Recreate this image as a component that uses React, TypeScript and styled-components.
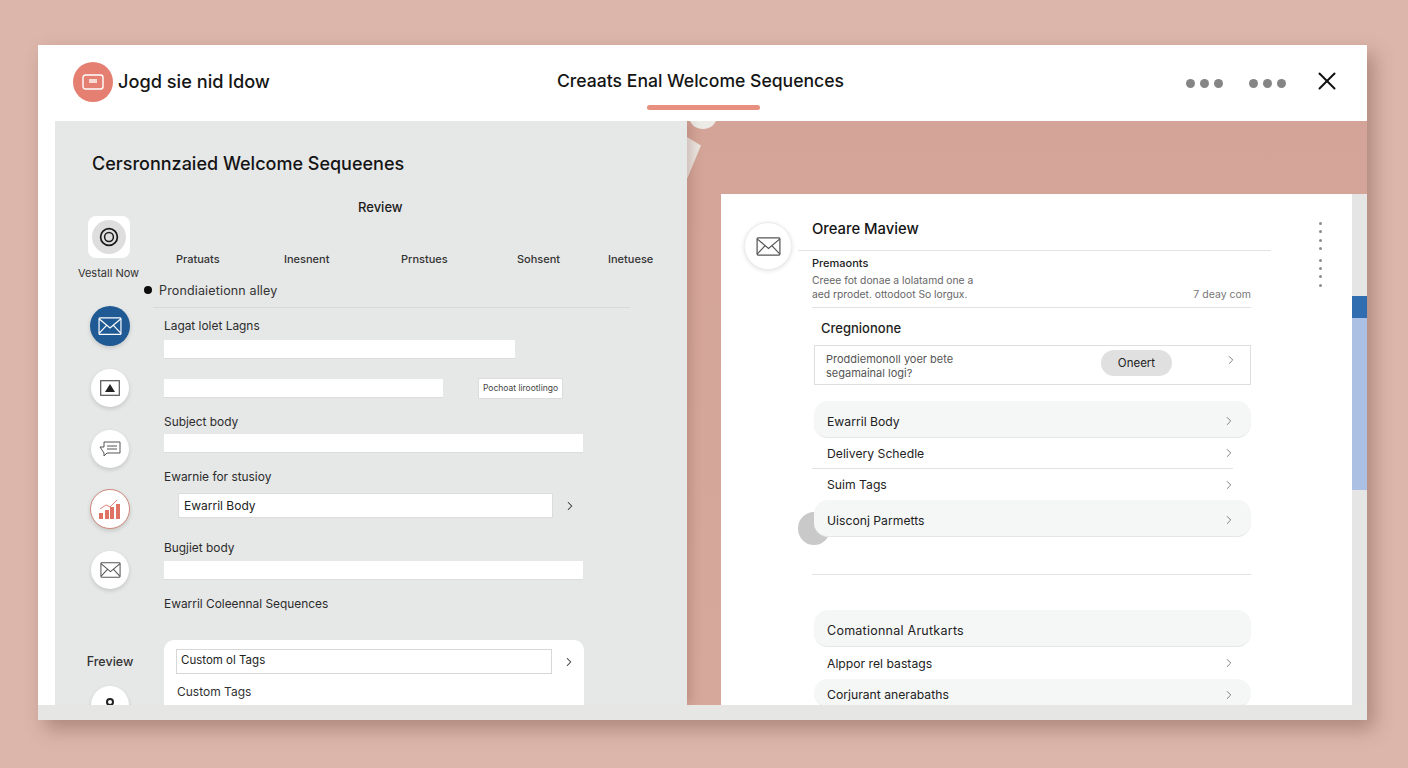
import React from 'react';
import styled, { createGlobalStyle } from 'styled-components';
import { ChevronRight, X } from 'lucide-react';

const GlobalStyle = createGlobalStyle`
    html, body {
        margin: 0;
        padding: 0;
        background: #dcb6aa;
    }
    * {
        box-sizing: border-box;
    }
`;

const Page = styled.div`
    width: 1408px;
    height: 768px;
    padding: 45px 41px 48px 38px;
    overflow: hidden;
    background: #dcb6aa;
    font-family: Inter, "Liberation Sans", sans-serif;
    color: #1c1c1c;
`;

const Window = styled.div`
    width: 1329px;
    height: 675px;
    display: flex;
    flex-direction: column;
    background: #fff;
    box-shadow: 7px 9px 18px rgba(100, 60, 50, 0.38);
`;

const Header = styled.header`
    height: 76px;
    flex: none;
    display: grid;
    grid-template-columns: 1fr auto 1fr;
    align-items: start;
    padding: 17px 39px 0 35px;
`;

const Brand = styled.div`
    display: flex;
    align-items: center;
    gap: 5px;
`;

const LogoCircle = styled.div`
    width: 40px;
    height: 40px;
    border-radius: 50%;
    background: #e57f72;
    display: flex;
    align-items: center;
    justify-content: center;
`;

const BrandName = styled.div`
    font-size: 18.2px;
    font-weight: 500;
    color: #161616;
    margin-top: -2px;
`;

const CenterTitle = styled.div`
    display: flex;
    flex-direction: column;
    align-items: center;
    padding-top: 8px;
`;

const WindowTitle = styled.div`
    font-size: 17.6px;
    line-height: 22px;
    font-weight: 500;
    color: #151515;
`;

const TitleAccent = styled.div`
    width: 113px;
    height: 5px;
    margin: 13px 0 0 6px;
    border-radius: 3px;
    background: #e8907f;
`;

const HeaderActions = styled.div`
    display: flex;
    justify-content: flex-end;
    align-items: center;
    height: 40px;
    margin-right: -14px;
    color: #111;
`;

const DotGroup = styled.div`
    display: flex;
    gap: 5px;
    margin-right: 26px;
    margin-top: 3px;
`;

const HeaderDot = styled.span`
    width: 9px;
    height: 9px;
    border-radius: 50%;
    background: #858585;
`;

const CloseIcon = styled(X)`
    margin-top: -2px;
`;

const Body = styled.div`
    flex: 1;
    min-height: 0;
    margin-left: 17px;
    display: flex;
    position: relative;
    overflow: hidden;
    background: #d3a497;
`;

const FootStrip = styled.div`
    height: 15px;
    flex: none;
    background: #e6e6e5;
`;

const FoldCircle = styled.div`
    position: absolute;
    left: 634px;
    top: -18px;
    width: 28px;
    height: 26px;
    border-radius: 50%;
    background: #ecebe6;
`;

const FoldCorner = styled.div`
    position: absolute;
    left: 632px;
    top: 16px;
    width: 14px;
    height: 42px;
    background: #e9e3de;
    clip-path: polygon(0 0, 100% 20%, 0 100%);
`;

/* left panel */
const LeftPanel = styled.section`
    width: 632px;
    flex: none;
    overflow: hidden;
    background: #e6e7e7;
    box-shadow: 4px 0 10px rgba(120, 70, 60, 0.25);
    z-index: 1;
`;

const PanelTitle = styled.h2`
    margin: 31px 0 0 37px;
    font-size: 18px;
    line-height: 24px;
    font-weight: 500;
    color: #141414;
`;

const ReviewLabel = styled.div`
    margin-top: 22px;
    padding-left: 303px;
    font-size: 13px;
    line-height: 18px;
    font-weight: 500;
`;

const PanelColumns = styled.div`
    display: flex;
`;

const Sidebar = styled.nav`
    width: 89px;
    flex: none;
    padding: 0 2px 0 23px;
    display: flex;
    flex-direction: column;
    align-items: center;
`;

const SquareButton = styled.div`
    width: 42px;
    height: 42px;
    margin-left: -2px;
    border-radius: 8px;
    background: #fff;
    display: flex;
    align-items: center;
    justify-content: center;
`;

const SquareInner = styled.div`
    width: 34px;
    height: 34px;
    border-radius: 50%;
    background: #dedede;
    display: flex;
    align-items: center;
    justify-content: center;
`;

const SideLabel = styled.div<{ $mt: number; $strong?: boolean }>`
    margin-top: ${(p) => p.$mt}px;
    margin-left: ${(p) => (p.$strong ? '0' : '-3px')};
    font-size: ${(p) => (p.$strong ? '12.5px' : '11px')};
    font-weight: ${(p) => (p.$strong ? 500 : 400)};
    line-height: 14px;
    white-space: nowrap;
    color: #333;
`;

const SideCircle = styled.div<{ $mt: number; $size?: number; $bg?: string; $ring?: string }>`
    width: ${(p) => p.$size ?? 38}px;
    height: ${(p) => p.$size ?? 38}px;
    flex: none;
    margin-top: ${(p) => p.$mt}px;
    border-radius: 50%;
    background: ${(p) => p.$bg ?? '#fff'};
    border: ${(p) => (p.$ring ? `1.5px solid ${p.$ring}` : 'none')};
    box-shadow: 0 2px 4px rgba(0, 0, 0, 0.14);
    display: flex;
    align-items: center;
    justify-content: center;
`;

const Form = styled.div`
    flex: 1;
    min-width: 0;
    padding-top: 36px;
`;

const Tabs = styled.div`
    display: grid;
    grid-template-columns: 108px 117px 116px 91px auto;
    margin-left: 32px;
    height: 14px;
    align-items: center;
`;

const Tab = styled.span`
    font-size: 11px;
    font-weight: 500;
    color: #333;
    white-space: nowrap;
`;

const BulletRow = styled.div`
    display: flex;
    align-items: center;
    gap: 7px;
    margin-top: 17px;
    height: 14px;
    font-size: 12.5px;
    letter-spacing: 0.15px;
    color: #333;
`;

const Bullet = styled.span`
    width: 8px;
    height: 8px;
    border-radius: 50%;
    background: #0c0c0c;
`;

const FormDivider = styled.div`
    height: 1px;
    margin: 10px 57px 0 9px;
    background: #d8d9d9;
`;

const FieldLabel = styled.div<{ $mt: number }>`
    margin: ${(p) => p.$mt}px 0 0 20px;
    font-size: 11.9px;
    line-height: 16px;
    color: #2c2c2c;
`;

const FieldInput = styled.div<{ $mt: number; $w: number }>`
    width: ${(p) => p.$w}px;
    height: 19px;
    margin: ${(p) => p.$mt}px 0 0 20px;
    background: #fff;
    border-bottom: 1px solid #dcdcdc;
`;

const FieldRow = styled.div<{ $mt: number }>`
    display: flex;
    align-items: center;
    margin-top: ${(p) => p.$mt}px;
`;

const SmallButton = styled.div`
    width: 85px;
    height: 21px;
    margin-left: 35px;
    border: 1px solid #dcdcdc;
    background: #fff;
    font-size: 8.5px;
    line-height: 19px;
    text-align: center;
    white-space: nowrap;
    color: #444;
`;

const ValueBox = styled.div`
    width: 375px;
    height: 25px;
    margin-left: 34px;
    padding-left: 5px;
    border: 1px solid #dcdcdc;
    background: #fff;
    font-size: 12px;
    line-height: 24px;
    color: #222;
`;

const RowChevron = styled.span`
    margin-left: 10px;
    display: flex;
`;

const TagsCard = styled.div`
    width: 420px;
    height: 80px;
    margin: 28px 0 0 20px;
    padding: 9px 0 0 12px;
    border-radius: 10px 10px 0 0;
    background: #fff;
`;

const TagsInputRow = styled.div`
    display: flex;
    align-items: center;
`;

const TagsInput = styled.div`
    width: 376px;
    height: 25px;
    padding-left: 4px;
    border: 1px solid #d8d8d8;
    font-size: 11.5px;
    line-height: 20px;
    color: #222;
`;

const TagsText = styled.div`
    margin: 10px 0 0 1px;
    font-size: 12px;
    line-height: 16px;
    color: #333;
`;

/* right side */
const RightSide = styled.section`
    flex: 1;
    min-width: 0;
    padding: 73px 0 0 34px;
    display: flex;
    background: linear-gradient(180deg, #d3a497, #d5a89b);
`;

const Card = styled.div`
    width: 631px;
    flex: none;
    display: flex;
    overflow: hidden;
    background: #fff;
`;

const AvatarColumn = styled.div`
    width: 77px;
    flex: none;
    padding: 28px 0 0 23px;
`;

const Avatar = styled.div`
    width: 48px;
    height: 48px;
    border-radius: 50%;
    background: #fff;
    border: 1px solid #ececec;
    box-shadow: 0 1px 4px rgba(0, 0, 0, 0.12);
    display: flex;
    align-items: center;
    justify-content: center;
`;

const MainColumn = styled.div`
    width: 473px;
    flex: none;
`;

const CardTitle = styled.h3`
    margin: 25px 0 0 14px;
    font-size: 14.8px;
    line-height: 20px;
    font-weight: 500;
    color: #141414;
`;

const TitleRule = styled.div`
    height: 1px;
    margin-top: 11px;
    background: #e4e4e4;
`;

const Inner = styled.div`
    margin: 0 20px 0 14px;
`;

const Eyebrow = styled.div`
    margin-top: 5px;
    font-size: 11px;
    line-height: 14px;
    font-weight: 500;
    color: #222;
`;

const DescRow = styled.div`
    display: flex;
    justify-content: space-between;
    align-items: flex-end;
    margin-top: 3px;
`;

const Desc = styled.div`
    font-size: 10.3px;
    line-height: 14px;
    color: #666;
`;

const DescMeta = styled.div`
    font-size: 10.5px;
    line-height: 14px;
    margin-bottom: -1px;
    color: #777;
`;

const InnerRule = styled.div<{ $mt: number; $mr?: number }>`
    height: 1px;
    margin-top: ${(p) => p.$mt}px;
    margin-right: ${(p) => p.$mr ?? 0}px;
    background: #e2e2e2;
`;

const SectionHead = styled.div`
    margin: 11px 0 0 9px;
    font-size: 13px;
    line-height: 18px;
    font-weight: 500;
    color: #222;
`;

const PromptBox = styled.div`
    height: 40px;
    margin: 8px 0 0 2px;
    padding: 0 12px 0 11px;
    display: flex;
    align-items: center;
    border: 1px solid #dedede;
`;

const PromptText = styled.div`
    flex: 1;
    padding-top: 2px;
    font-size: 11px;
    line-height: 14px;
    color: #555;
`;

const Pill = styled.div`
    width: 71px;
    height: 26px;
    margin-top: -5px;
    margin-right: 52px;
    border-radius: 13px;
    background: #e0e0e0;
    font-size: 11.5px;
    line-height: 26px;
    text-align: center;
    color: #222;
`;

const PromptChevron = styled.span`
    display: flex;
    margin-top: -10px;
`;

const ListRow = styled.div<{ $mt: number; $filled?: boolean; $h?: number }>`
    height: ${(p) => p.$h ?? 37}px;
    margin-top: ${(p) => p.$mt}px;
    margin-left: 2px;
    padding: ${(p) => (p.$filled ? '4px' : '0')} 15px 0 13px;
    display: flex;
    align-items: center;
    justify-content: space-between;
    font-size: 12.2px;
    color: #222;
    border-radius: ${(p) => (p.$filled ? '14px' : '0')};
    background: ${(p) => (p.$filled ? '#f5f6f6' : 'transparent')};
    border-bottom: ${(p) => (p.$filled ? '1px solid #e6e6e6' : 'none')};
`;

const WideText = styled.span`
    font-size: 12.5px;
    letter-spacing: 0.25px;
`;

const GreyBlob = styled.div`
    width: 32px;
    height: 33px;
    margin: -25px 0 0 -14px;
    border-radius: 50%;
    background: #c9c9c9;
    flex: none;
`;

const RowStack = styled.div`
    position: relative;
    z-index: 1;
`;

const Kebab = styled.div`
    margin: 28px 0 0 48px;
    display: flex;
    flex-direction: column;
    gap: 5.4px;
`;

const KebabDot = styled.span<{ $gap?: boolean }>`
    width: 3px;
    height: 3px;
    border-radius: 50%;
    background: #8c8c8c;
    margin-top: ${(p) => (p.$gap ? '3px' : '0')};
`;

const Scrollbar = styled.div`
    flex: 1;
    display: flex;
    flex-direction: column;
    background: #e5e5e5;
`;

const ScrollPiece = styled.div<{ $h: number; $bg: string }>`
    height: ${(p) => p.$h}px;
    background: ${(p) => p.$bg};
`;

const MailIcon = ({ color = '#555', size = 26 }: { color?: string; size?: number }) => (
    <svg width={size} height={size * 0.76} viewBox="0 0 26 20" fill="none" stroke={color} strokeWidth="1.3">
        <rect x="1" y="1" width="24" height="18" rx="1" />
        <path d="M1 2l12 10L25 2M1 18l8.5-9M25 18l-8.5-9" />
    </svg>
);

const Chevron = ({ color = '#666', weight = 1.4 }: { color?: string; weight?: number }) => (
    <ChevronRight size={14} color={color} strokeWidth={weight} />
);

export default function App() {
    return (
        <Page>
            <GlobalStyle />
            <Window>
                <Header>
                    <Brand>
                        <LogoCircle>
                            <svg width="22" height="16" viewBox="0 0 22 16" fill="none">
                                <rect x="1" y="1" width="20" height="14" rx="2.5" stroke="#fff" strokeWidth="1.4" />
                                <rect x="7" y="5" width="8" height="4" fill="#fff" opacity="0.7" />
                            </svg>
                        </LogoCircle>
                        <BrandName>Jogd sie nid ldow</BrandName>
                    </Brand>
                    <CenterTitle>
                        <WindowTitle>Creaats Enal Welcome Sequences</WindowTitle>
                        <TitleAccent />
                    </CenterTitle>
                    <HeaderActions>
                        <DotGroup>
                            <HeaderDot />
                            <HeaderDot />
                            <HeaderDot />
                        </DotGroup>
                        <DotGroup>
                            <HeaderDot />
                            <HeaderDot />
                            <HeaderDot />
                        </DotGroup>
                        <CloseIcon size={30} strokeWidth={1.6} />
                    </HeaderActions>
                </Header>
                <Body>
                    <FoldCircle />
                    <FoldCorner />
                    <LeftPanel>
                        <PanelTitle>Cersronnzaied Welcome Sequeenes</PanelTitle>
                        <ReviewLabel>Review</ReviewLabel>
                        <PanelColumns>
                            <Sidebar>
                                <SquareButton>
                                    <SquareInner>
                                        <svg width="20" height="20" viewBox="0 0 20 20" fill="none" stroke="#1a1a1a">
                                            <circle cx="10" cy="10" r="8.4" strokeWidth="1.7" />
                                            <circle cx="10" cy="10" r="4.4" strokeWidth="1.5" />
                                        </svg>
                                    </SquareInner>
                                </SquareButton>
                                <SideLabel $mt={8}>Vestall Now</SideLabel>
                                <SideCircle $mt={26} $size={40} $bg="#1f5a94">
                                    <MailIcon color="#fff" size={24} />
                                </SideCircle>
                                <SideCircle $mt={23}>
                                    <svg width="20" height="16" viewBox="0 0 20 16">
                                        <rect x="0.7" y="0.7" width="18.6" height="14.6" fill="none" stroke="#555" strokeWidth="1.2" />
                                        <path d="M10 4l5 8H5z" fill="#222" />
                                    </svg>
                                </SideCircle>
                                <SideCircle $mt={23}>
                                    <svg width="22" height="16" viewBox="0 0 22 16" fill="none" stroke="#555" strokeWidth="1">
                                        <path d="M5 1h16v11H8l-3 3v-3L1 6h4z" />
                                        <path d="M8 5h10M8 8h10" />
                                    </svg>
                                </SideCircle>
                                <SideCircle $mt={21} $size={40} $ring="#d0877a">
                                    <svg width="22" height="20" viewBox="0 0 22 20">
                                        <path d="M0 14h4v6H0zM6 11h4v9H6zM11 8h4v12h-4zM17 5h4v15h-4z" fill="#de7365" />
                                        <path d="M1 10l6-4 4 2 7-7" fill="none" stroke="#de7365" strokeWidth="0.9" />
                                    </svg>
                                </SideCircle>
                                <SideCircle $mt={22}>
                                    <MailIcon size={21} />
                                </SideCircle>
                                <SideLabel $mt={66} $strong>Freview</SideLabel>
                                <SideCircle $mt={17}>
                                    <svg width="12" height="16" viewBox="0 0 12 16">
                                        <circle cx="6" cy="5" r="3" fill="none" stroke="#222" strokeWidth="2" />
                                        <path d="M1 14a5 5 0 0 1 10 0z" fill="#222" />
                                    </svg>
                                </SideCircle>
                            </Sidebar>
                            <Form>
                                <Tabs>
                                    <Tab>Pratuats</Tab>
                                    <Tab>Inesnent</Tab>
                                    <Tab>Prnstues</Tab>
                                    <Tab>Sohsent</Tab>
                                    <Tab>Inetuese</Tab>
                                </Tabs>
                                <BulletRow>
                                    <Bullet />
                                    Prondiaietionn alley
                                </BulletRow>
                                <FormDivider />
                                <FieldLabel $mt={10}>Lagat lolet Lagns</FieldLabel>
                                <FieldInput $mt={6} $w={351} />
                                <FieldRow $mt={19}>
                                    <FieldInput $mt={0} $w={279} />
                                    <SmallButton>Pochoat lirootlingo</SmallButton>
                                </FieldRow>
                                <FieldLabel $mt={15}>Subject body</FieldLabel>
                                <FieldInput $mt={4} $w={419} />
                                <FieldLabel $mt={16}>Ewarnie for stusioy</FieldLabel>
                                <FieldRow $mt={8}>
                                    <ValueBox>Ewarril Body</ValueBox>
                                    <RowChevron>
                                        <Chevron color="#333" weight={1.8} />
                                    </RowChevron>
                                </FieldRow>
                                <FieldLabel $mt={22}>Bugjiet body</FieldLabel>
                                <FieldInput $mt={5} $w={419} />
                                <FieldLabel $mt={16}>Ewarril Coleennal Sequences</FieldLabel>
                                <TagsCard>
                                    <TagsInputRow>
                                        <TagsInput>Custom ol Tags</TagsInput>
                                        <RowChevron>
                                            <Chevron color="#333" weight={1.8} />
                                        </RowChevron>
                                    </TagsInputRow>
                                    <TagsText>Custom Tags</TagsText>
                                </TagsCard>
                            </Form>
                        </PanelColumns>
                    </LeftPanel>
                    <RightSide>
                        <Card>
                            <AvatarColumn>
                                <Avatar>
                                    <MailIcon size={25} />
                                </Avatar>
                            </AvatarColumn>
                            <MainColumn>
                                <CardTitle>Oreare Maview</CardTitle>
                                <TitleRule />
                                <Inner>
                                    <Eyebrow>Premaonts</Eyebrow>
                                    <DescRow>
                                        <Desc>
                                            Creee fot donae a lolatamd one a
                                            <br />
                                            aed rprodet. ottodoot So lorgux.
                                        </Desc>
                                        <DescMeta>7 deay com</DescMeta>
                                    </DescRow>
                                    <InnerRule $mt={6} />
                                    <SectionHead>Cregnionone</SectionHead>
                                    <PromptBox>
                                        <PromptText>
                                            Proddiemonoll yoer bete
                                            <br />
                                            segamainal logi?
                                        </PromptText>
                                        <Pill>Oneert</Pill>
                                        <PromptChevron>
                                            <Chevron />
                                        </PromptChevron>
                                    </PromptBox>
                                    <ListRow $mt={16} $filled>
                                        Ewarril Body
                                        <Chevron />
                                    </ListRow>
                                    <ListRow $mt={0} $h={30}>
                                        Delivery Schedle
                                        <Chevron />
                                    </ListRow>
                                    <InnerRule $mt={0} $mr={18} />
                                    <ListRow $mt={0} $h={31}>
                                        Suim Tags
                                        <Chevron />
                                    </ListRow>
                                    <RowStack>
                                        <ListRow $mt={0} $filled>
                                            Uisconj Parmetts
                                            <Chevron />
                                        </ListRow>
                                    </RowStack>
                                    <GreyBlob />
                                    <InnerRule $mt={29} />
                                    <ListRow $mt={35} $filled>
                                        <WideText>Comationnal Arutkarts</WideText>
                                    </ListRow>
                                    <ListRow $mt={0} $h={32}>
                                        Alppor rel bastags
                                        <Chevron />
                                    </ListRow>
                                    <ListRow $mt={0} $h={28} $filled>
                                        Corjurant anerabaths
                                        <Chevron />
                                    </ListRow>
                                </Inner>
                            </MainColumn>
                            <Kebab>
                                <KebabDot />
                                <KebabDot />
                                <KebabDot />
                                <KebabDot />
                                <KebabDot $gap />
                                <KebabDot />
                                <KebabDot />
                                <KebabDot />
                            </Kebab>
                        </Card>
                        <Scrollbar>
                            <ScrollPiece $h={102} $bg="#e5e5e5" />
                            <ScrollPiece $h={22} $bg="#2f6cb0" />
                            <ScrollPiece $h={172} $bg="#abc0e3" />
                        </Scrollbar>
                    </RightSide>
                </Body>
                <FootStrip />
            </Window>
        </Page>
    );
}
